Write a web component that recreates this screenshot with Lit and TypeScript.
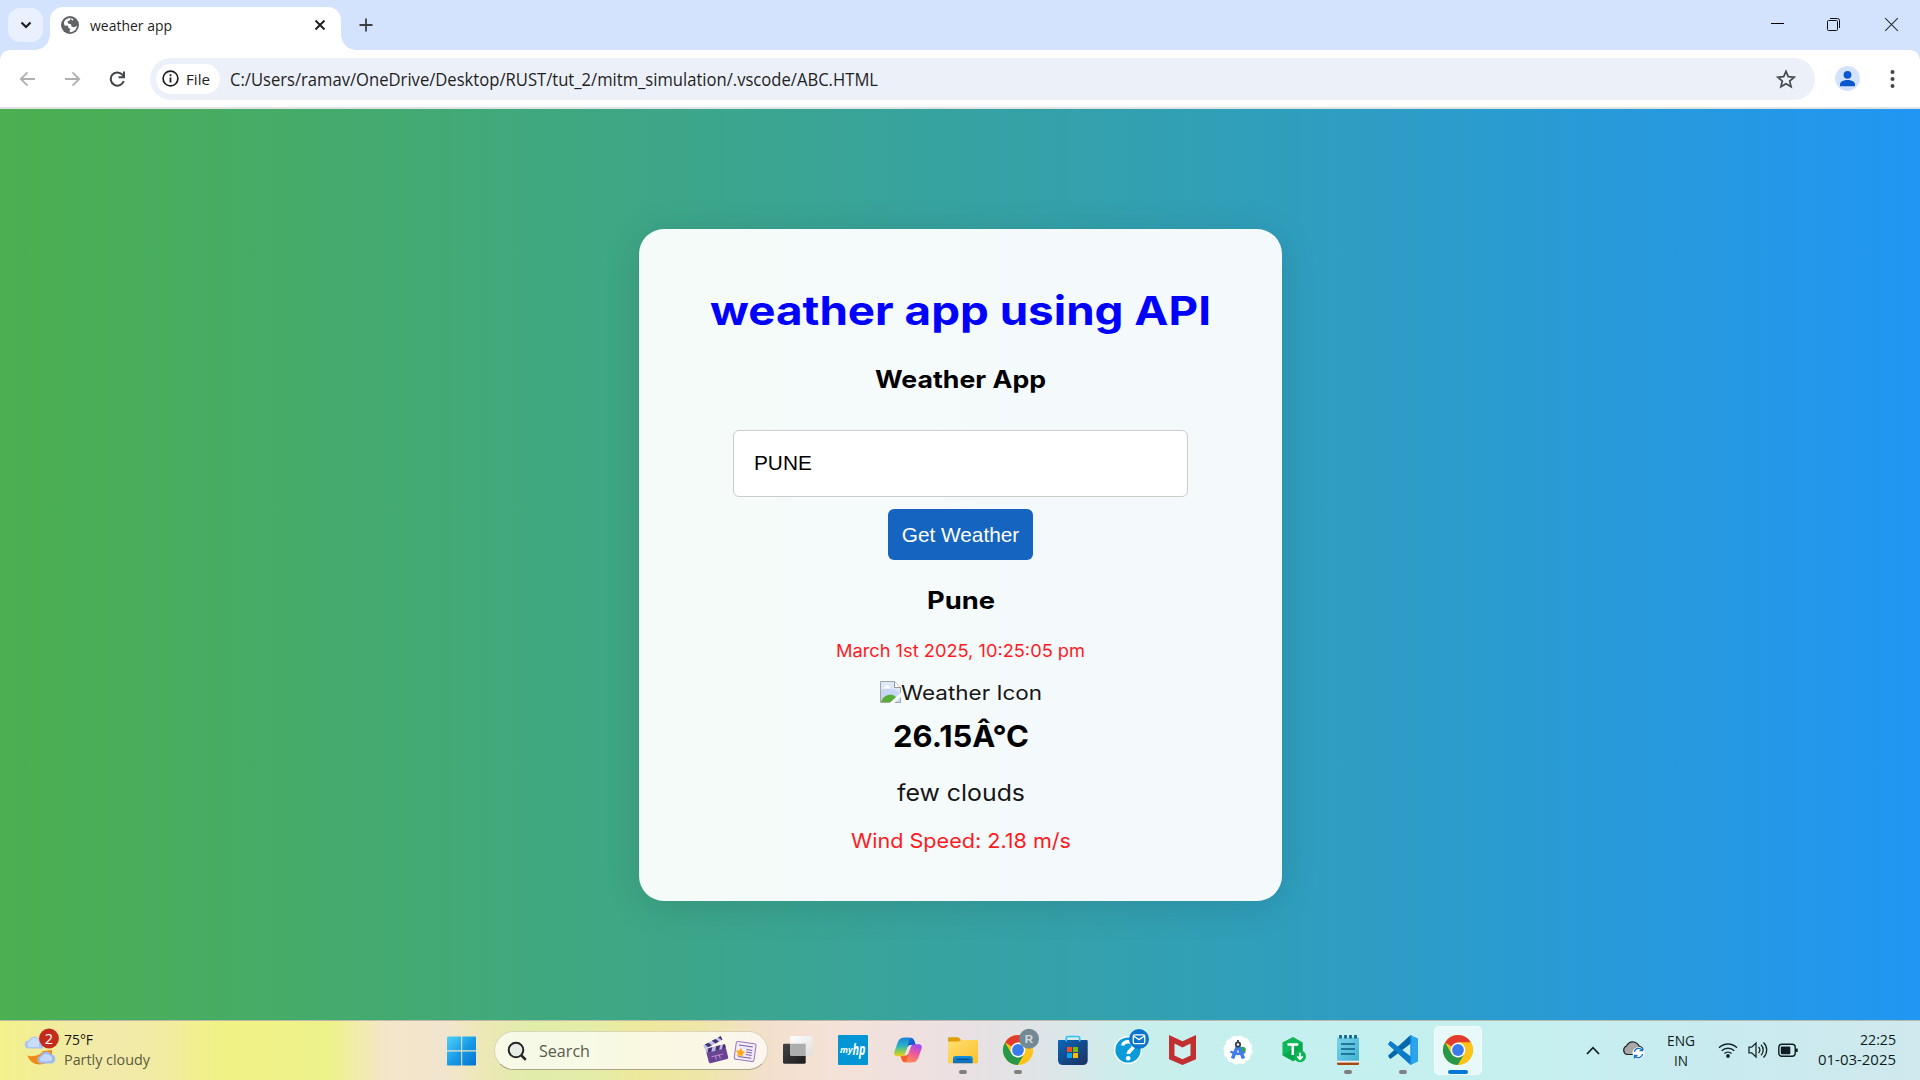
import { LitElement, html, svg, css } from "lit";
import { customElement, property } from "lit/decorators.js";

/* Text set to an exact advance width, whatever font is available. */
@customElement("fit-text")
class FitText extends LitElement {
  @property({ type: Number }) width = 0;
  static styles = css`
    :host { display: inline-block; white-space: nowrap; flex: none; text-align: left; }
    .run { display: inline-block; transform-origin: 0 50%; }
  `;
  firstUpdated() {
    const run = this.renderRoot.querySelector(".run") as HTMLElement;
    const natural = run.getBoundingClientRect().width;
    this.style.width = `${this.width}px`;
    if (natural) run.style.transform = `scaleX(${this.width / natural})`;
  }
  render() { return html`<span class="run"><slot></slot></span>`; }
}

const chromeLogo = svg`
  <circle r="15" fill="#fbc116"/>
  <path d="M0 0 L-13 -7.5 A15 15 0 0 1 13 -7.5 L0 -7.5Z" fill="#e33b2e"/>
  <path d="M-13 -7.5 A15 15 0 0 0 0 15 L6.5 3.7 L0 7.5 L-6.5 3.7Z" fill="#279847"/>
  <path d="M13 -7.5 H0 L6.5 3.75 L0 15 A15 15 0 0 0 13 -7.5Z" fill="#fcc31a"/>
  <circle r="7.4" fill="#fff"/><circle r="5.9" fill="#3a7cec"/>`;

const apps: { art: unknown; running?: boolean; active?: boolean }[] = [
  { art: svg`
    <defs><linearGradient id="tvd" x1="0" y1="0" x2="1" y2="1"><stop stop-color="#444"/><stop offset="1" stop-color="#1c1c1c"/></linearGradient>
    <linearGradient id="tvl" x1="0" y1="0" x2="1" y2="1"><stop stop-color="#fff"/><stop offset="1" stop-color="#dedede"/></linearGradient></defs>
    <rect x="-15" y="-6.3" width="22.7" height="20" rx="1.4" fill="url(#tvd)"/>
    <rect x="-7.7" y="-14" width="22.4" height="20" rx="1.4" fill="url(#tvl)"/>
    <path d="M-7.7 -6.3H7.7V6H-6.3a1.4 1.4 0 0 1-1.4-1.4Z" fill="#adadad"/>` },
  { art: svg`
    <rect x="-15" y="-15" width="30" height="30" rx="1" fill="#0096d6"/>
    <text x="-13" y="3" class="my" textLength="12.5" lengthAdjust="spacingAndGlyphs">my</text>
    <text x="-0.6" y="4.6" class="hp" textLength="13" lengthAdjust="spacingAndGlyphs">hp</text>` },
  { art: svg`
    <defs><linearGradient id="cpa" x1="0" y1="0" x2="0" y2="1"><stop stop-color="#1b7fe0"/><stop offset=".45" stop-color="#2bb6c0"/><stop offset=".75" stop-color="#8fce4c"/><stop offset="1" stop-color="#f3cf1d"/></linearGradient>
    <linearGradient id="cpb" x1=".6" y1="0" x2=".3" y2="1"><stop stop-color="#a14df0"/><stop offset=".5" stop-color="#ee5a9c"/><stop offset="1" stop-color="#ff8a52"/></linearGradient>
    <linearGradient id="cpc" x1="0" y1="0" x2="1" y2="1"><stop stop-color="#1b8ae6"/><stop offset="1" stop-color="#1737b8"/></linearGradient></defs>
    <path d="M-4 -12.3H2.5C5 -12.3 6 -10.5 6.600 -8.500L7.800 -5H3C0 -5 -1 -3 -2 0Z" fill="url(#cpc)"/>
    <path d="M4 12.300H-3C-5.500 12.300 -6 10.500 -6.700 8.500L-7.800 5.600H-3C0 5.600 1 3 2 0Z" fill="#f5602f"/>
    <path d="M2 -12.300H-4.500C-8 -12.300 -9.500 -10 -10.700 -6.500L-13.500 1.500C-14.800 5.200 -12.500 6.300 -10 6.300H-6.500C-4 6.300 -3.200 4.500 -2.500 2.500L0.700 -8C1.300 -10 1.500 -11.500 2 -12.300Z" fill="url(#cpa)"/>
    <path d="M-2 12.300H4.500C8 12.300 9.500 10 10.700 6.500L13.500 -1C14.800 -4.700 12.500 -5.800 10 -5.800H6.500C4 -5.800 3.200 -4 2.500 -2L-0.700 8C-1.300 10 -1.500 11.500 -2 12.300Z" fill="url(#cpb)"/>` },
  { running: true, art: svg`
    <defs><linearGradient id="fo" x1="0" y1="0" x2="1" y2="1"><stop stop-color="#ffdf72"/><stop offset="1" stop-color="#fbc02b"/></linearGradient>
    <linearGradient id="fb" x1="0" y1="0" x2="0" y2="1"><stop stop-color="#1390df"/><stop offset="1" stop-color="#1069b9"/></linearGradient></defs>
    <path d="M-15 -11.500q0-1.200 1.200-1.200h8.300q1 0 1.700.8l2 2.200V-4H-15Z" fill="#dd9d08"/>
    <path d="M-15 -8.500h10.500l3-1.500H14q1 0 1 1v21.300q0 1-1 1H-14q-1 0-1-1Z" fill="url(#fo)"/>
    <path d="M-10 13.300V8.500Q-10 6-7.500 6H7.200Q9.700 6 9.700 8.500v4.800Z" fill="url(#fb)"/>
    <rect x="-6.500" y="8.800" width="13" height="1.300" rx=".6" fill="#0a4d8f"/>` },
  { running: true, art: svg`${chromeLogo}
    <circle cx="11" cy="-11.300" r="10" fill="#738a95"/>
    <text x="11" y="-7" text-anchor="middle" class="badge-r">R</text>` },
  { art: svg`
    <defs><linearGradient id="st" x1="0" y1="0" x2="1" y2="1"><stop stop-color="#0a66bb"/><stop offset="1" stop-color="#1c2f5c"/></linearGradient></defs>
    <path d="M-14 -10H13.700q1 0 1 1V10q0 5-5 5H-10q-5 0-5-5V-9q0-1 1-1Z" fill="url(#st)"/>
    <path d="M-6.800 -8.500v-3q0-2 2-2H4.700q2 0 2 2v3" fill="none" stroke="#2cc5f2" stroke-width="1.700"/>
    <path d="M-6 -3h5v5h-5Z" fill="#f25022"/><path d="M0 -3h5v5h-5Z" fill="#7fba00"/><path d="M-6 3h5v5h-5Z" fill="#00a4ef"/><path d="M0 3h5v5h-5Z" fill="#ffb900"/>` },
  { art: svg`
    <circle r="14" fill="#fff"/><circle r="12.600" fill="#0a9bd8"/>
    <path d="M-5.200 -4.500C-5 -9.500 5.500 -9.800 5.300 -3.800C5.200 0 0.300 0 0.300 4" fill="none" stroke="#fff" stroke-width="3.600"/><circle cx=".2" cy="8.300" r="2.300" fill="#fff"/>
    <circle cx="11" cy="-11" r="10" fill="#0b74ce"/>
    <rect x="5.300" y="-15.200" width="11.400" height="8.800" rx="1.300" fill="none" stroke="#fff" stroke-width="1.300"/><path d="M5.500 -14 11 -10.400 16.500 -14" fill="none" stroke="#fff" stroke-width="1.300"/>` },
  { art: svg`
    <path d="M-14 -15 -0.500 -8.700 13 -15V9.200L-0.500 15 -14 9.200Z" fill="#c22f31"/>
    <path d="M-8.500 -6.500 -0.500 -2.500 7.500 -6.500V5.500L-0.500 9.300 -8.500 5.500Z" fill="#d0f0ef"/>` },
  { art: svg`
    <circle r="13.700" fill="#fff"/><circle r="13.900" fill="none" stroke="#fff" stroke-width="1.400" stroke-dasharray="4 3.280"/>
    <circle cx="4.500" cy="0" r="3.300" fill="#32a350"/>
    <path d="M-0.200 -4.500 -5.500 8.500M.2 -4.500 5.500 8.500" stroke="#3f7ee8" stroke-width="3.500"/>
    <path d="M-7.500 1.500Q0 6 7 2" fill="none" stroke="#3f7ee8" stroke-width="2.500"/>
    <circle cx="0" cy="-5.500" r="2.200" fill="#fff" stroke="#333b45" stroke-width="1.700"/><path d="M0 -10V-7.500" stroke="#333b45" stroke-width="1.800"/>` },
  { art: svg`
    <path d="M0 -12.700 9.700 -7.500V5.500L0 11.200 -10.300 5.500V-7.500Z" fill="#06a84c"/><path d="M0 -12.700 9.700 -7.500 -10.300 5.500V-7.500Z" fill="#12b65a"/>
    <path d="M-5.500 -5.500H5.200M-.2 -5.500V5" stroke="#fff" stroke-width="2.500"/>
    <circle cx="7" cy="6.300" r="6" fill="#10b455"/><path d="M7 2.800V8M4.300 6.300 7 9.200 9.700 6.300" fill="none" stroke="#fff" stroke-width="1.700"/>` },
  { running: true, art: svg`
    <defs><linearGradient id="np" x1="0" y1="0" x2="1" y2="1"><stop stop-color="#7cd5ea"/><stop offset="1" stop-color="#3fb2d6"/></linearGradient></defs>
    <rect x="-11" y="10" width="22" height="5" rx="1" fill="#a4480d"/><rect x="-11" y="9" width="22" height="3.600" fill="#eee"/>
    <path d="M-11 -12.500H11V10.800H-10q-1 0-1-1Z" fill="url(#np)"/>
    <path d="M-7 -6H7M-7 -1H7M-7 4H7" stroke="#0b5e83" stroke-width="1.700"/>
    <path d="M-7.500 -15v3.600M-2.500 -15v3.600M2.500 -15v3.600M7.500 -15v3.600" stroke="#0b6282" stroke-width="2.700"/>` },
  { running: true, art: svg`
    <path d="M7.500 -15 15 -11.500V11.500L7.500 15Z" fill="#2aa5ee"/>
    <path d="M-12.500 -9Q-15 -7-14.800 -5.500L7.500 15 8.500 7Z" fill="#0a7bc8"/>
    <path d="M-12.500 9Q-15 7-14.800 5.500L7.500 -15 8.500 -7Z" fill="#0568ad"/>
    <path d="M-12.500 -9-14.800 -5.500 -4 4 0 1Z" fill="#0c80cf"/>
    <path d="M7.500 -15 9 -14V14L7.500 15Z" fill="#1f9be8"/>` },
  { active: true, art: chromeLogo },
];

const ico = (w: number, h: number, body: unknown) => html`<svg width=${w} height=${h} viewBox="0 0 ${w} ${h}" fill="none">${body}</svg>`;

@customElement("app-root")
class AppRoot extends LitElement {
  static styles = css`
    :host { display: flex; flex-direction: column; width: 1920px; height: 1080px; overflow: hidden; font-family: "Open Sans", "Noto Sans", sans-serif; color: #1f1f1f; }
    * { box-sizing: border-box; }
    svg { display: block; flex: none; }
    .strip { height: 50px; background: #d3e3fd; display: flex; flex: none; padding-left: 8px; }
    .drop { width: 35px; height: 34px; margin-top: 8px; border-radius: 12px; background: #e9f0fe; display: grid; place-items: center; }
    .tab { position: relative; width: 291px; height: 43px; margin: 7px 0 0 7px; background: #fff; border-radius: 13px 13px 0 0; display: flex; align-items: center; padding: 0 14px 7px 11px; }
    .tab::before, .tab::after { content: ""; position: absolute; bottom: 0; width: 15px; height: 15px; }
    .tab::before { left: -15px; background: radial-gradient(circle at 0 0, transparent 14.5px, #fff 15px); }
    .tab::after { right: -15px; background: radial-gradient(circle at 100% 0, transparent 14.5px, #fff 15px); }
    .title { font-size: 14.5px; line-height: 20px; margin-left: 11px; flex: 1; margin-top: 1px; }
    .plus { margin: 18px 0 0 18px; }
    .controls { margin: 17px 21px 0 auto; display: flex; gap: 43px; }
    .controls svg:first-child { margin-right: -2px; }
    .bar { height: 59px; flex: none; background: #d3e3fd; display: flex; }
    .inner { flex: 1; background: #fff; border-radius: 10px 10px 0 0; border-bottom: 2px solid #dfe3e1; display: flex; align-items: center; padding-left: 19px; }
    .nav { display: flex; gap: 28px; width: 131px; }
    .omni { width: 1665px; height: 42px; border-radius: 21px; background: #ecf0f9; display: flex; align-items: center; padding: 0 19px 0 6px; }
    .chip { width: 64px; height: 30px; border-radius: 15px; background: #fff; display: flex; align-items: center; padding-left: 6px; gap: 7px; font-size: 15px; line-height: 20px; font-weight: 500; margin-right: 10px; }
    .url { font-size: 18px; line-height: 24px; flex: 1; margin-top: 1px; }
    .avatar { margin-left: 20px; }
    .dots { margin-left: 29px; }
    .page { flex: 1; background: linear-gradient(to right, #4caf50, #2196f3); display: flex; align-items: flex-start; justify-content: center; padding-top: 120px; }
    .card { width: 643px; height: 672px; margin-left: 1px; border-radius: 25px; background: rgba(255,255,255,.95); box-shadow: 0 5px 38px rgba(0,0,0,.12); padding-top: 57px; display: flex; flex-direction: column; align-items: center; font-family: Inter, sans-serif; color: #000; }
    .h1 { font-size: 40px; font-weight: 700; line-height: 50px; color: #00f; }
    .h2 { font-size: 24px; font-weight: 700; line-height: 30px; margin-top: 29px; }
    .field { width: 455px; height: 67px; margin-top: 35px; border: 1px solid #ccc; border-radius: 6px; background: #fff; font: 20.8px/63px "Liberation Sans", Arial, sans-serif; padding-left: 20px; }
    .btn { width: 145px; height: 51px; margin-top: 12px; border: 0; border-radius: 6px; background: #1565c0; color: #fff; font: 20.8px/51px "Liberation Sans", Arial, sans-serif; padding: 0; text-align: center; }
    .city { font-size: 24px; font-weight: 700; line-height: 30px; margin-top: 26px; }
    .date { font-size: 17.200px; line-height: 24px; margin-top: 23px; color: #ff1a1f; }
    .pic { display: flex; font-size: 20.200px; line-height: 24px; height: 24px; margin-top: 18px; color: #161616; }
    .temp { font-size: 30.500px; font-weight: 700; line-height: 36px; margin-top: 13px; }
    .desc { font-size: 22.700px; line-height: 30px; margin-top: 24px; color: #161616; }
    .wind { font-size: 20.300px; line-height: 24px; margin-top: 21px; color: #ff1a1f; }
    .task { height: 60px; flex: none; border-top: 1px solid #b9b9ac; display: flex; align-items: center; background: linear-gradient(to right, #f2f18a 0, #f2eca0 60px, #f2e9ab 110px, #f2eca0 170px, #f1f285 215px, #eef28b 330px, #f3e6c8 385px, #f2e5cf 445px, #eee8b8 480px, #e1eca9 530px, #e4eda8 590px, #ede89c 640px, #eee6a8 700px, #f3e0cb 765px, #f4e2d9 840px, #ece0e2 950px, #dde5e8 1050px, #c8efec 1140px, #c4f0ef 1300px, #c6f0f0 1500px, #c8ebef 1700px, #cfe9ee 1920px); }
    .weather { width: 447px; display: flex; padding-left: 24px; gap: 4px; }
    .wt { display: flex; flex-direction: column; font-size: 15px; line-height: 20px; margin-top: 2px; color: #151510; }
    .dim { color: #5c5c3e; }
    .search { width: 274px; height: 39px; border-radius: 20px; margin: 0 4px 0 17px; background: rgba(255,255,255,.7); border: 1px solid rgba(190,180,140,.5); border-bottom-color: #aaa385; display: flex; align-items: center; padding: 0 10px 0 12px; font-size: 17px; line-height: 22px; color: #5a5a50; }
    .search fit-text { margin-left: 12px; }
    .art { margin-left: auto; }
    .apps { display: flex; gap: 1px; margin-left: -1px; }
    .app { position: relative; width: 54px; height: 59px; }
    .app svg { position: relative; overflow: visible; }
    .tile { position: absolute; left: 3px; top: 5px; width: 48px; height: 49px; border-radius: 5px; background: rgba(255,255,255,.58); border: 1px solid rgba(255,255,255,.4); }
    .my { font: italic 700 9px "Open Sans", sans-serif; fill: #fff; }
    .hp { font: italic 700 16px "Open Sans", sans-serif; fill: #fff; }
    .badge-r { font: 700 11.500px "Liberation Sans", sans-serif; fill: #d3d9dd; }
    .tray { margin-left: auto; display: flex; align-items: center; padding-right: 24px; color: #101c20; font-size: 15px; line-height: 20px; }
    .cloud { margin-top: -2px; }
    .lang { display: flex; flex-direction: column; align-items: center; width: 28px; margin: -1px 23px 0 13px; }
    .status { display: flex; gap: 10px; margin-top: -2px; }
    .clock { display: flex; flex-direction: column; align-items: flex-end; margin: -3px 0 0 20px; }
  `;

  render() {
    return html`
    <div class="strip">
      <div class="drop">${ico(12, 8, svg`<path d="M1.500 1.500 6 6l4.500-4.500" stroke="#1f1f1f" stroke-width="2.200"/>`)}</div>
      <div class="tab">
        ${ico(18, 18, svg`<circle cx="9" cy="9" r="9" fill="#5f6368"/><path d="M3 7.500C3 4.300 6 2 9.500 2L9 4.200 6.500 5.500 7 7.500 10 8.300 10.500 10.500 13 11.200C15 11 16.200 9.500 16 8.800C16.200 13 13 16.200 9 16.200L8.500 14.500 9.500 13.200 7.300 11.800 7 9.800 3.500 9.500Z" fill="#fff"/><path d="M9 2.200 12.500 3 11.500 4.700Z" fill="#fff"/>`)}
        <fit-text class="title" width="82">weather app</fit-text>
        ${ico(14, 14, svg`<path d="m2.500 2.500 9 9m0-9-9 9" stroke="#1f1f1f" stroke-width="1.900"/>`)}
      </div>
      <div class="plus">${ico(14, 14, svg`<path d="M7 .5v13M.5 7h13" stroke="#3c4043" stroke-width="1.800"/>`)}</div>
      <div class="controls">
        ${ico(15, 15, svg`<path d="M1 6.500h13" stroke="#000" stroke-width="1"/>`)}
        ${ico(15, 15, svg`<rect x="1.500" y="3.500" width="10" height="10" rx="1" stroke="#111"/><path d="M4 1.500h7.500q2 0 2 2v7.500" stroke="#111"/>`)}
        ${ico(15, 15, svg`<path d="m1.200 1.200 12.600 12.600m0-12.600L1.200 13.800" stroke="#2b2f36" stroke-width="1.100"/>`)}
      </div>
    </div>
    <div class="bar"><div class="inner">
      <div class="nav">
        ${ico(17, 16, svg`<path d="M16 8H2M8.500 1.300 1.800 8l6.700 6.700" stroke="#b0b0b0" stroke-width="1.800"/>`)}
        ${ico(17, 16, svg`<path d="M1 8h14M8.500 1.300 15.200 8l-6.700 6.700" stroke="#b0b0b0" stroke-width="1.800"/>`)}
        ${ico(17, 16, svg`<path d="M14.700 10A6.600 6.600 0 1 1 13.300 3.600L15 5.300" stroke="#3f4246" stroke-width="2"/><path d="M15 .5V6.200H9.500" stroke="#3f4246" stroke-width="1.900"/>`)}
      </div>
      <div class="omni">
        <div class="chip">${ico(17, 17, svg`<circle cx="8.500" cy="8.500" r="7.400" stroke="#1f1f1f" stroke-width="1.700"/><path d="M8.500 7.500v5M8.500 4.300v1.900" stroke="#1f1f1f" stroke-width="1.800"/>`)}<fit-text width="24">File</fit-text></div>
        <fit-text class="url" width="648">C:/Users/ramav/OneDrive/Desktop/RUST/tut_2/mitm_simulation/.vscode/ABC.HTML</fit-text>
        ${ico(20, 20, svg`<path d="m10 2.300 2.300 5.400 5.900.5-4.500 3.900 1.400 5.700L10 14.700l-5.100 3.100 1.400-5.700-4.500-3.900 5.900-.5Z" stroke="#46494d" stroke-width="1.700"/>`)}
      </div>
      <div class="avatar">${ico(25, 25, svg`<circle cx="12.500" cy="12.500" r="12.500" fill="#d3e3fd"/><circle cx="12.500" cy="8.800" r="3.900" fill="#0b57d0"/><path d="M5 20.300v-2.100c0-2.600 3.800-4.200 7.500-4.200s7.500 1.600 7.500 4.200v2.100Z" fill="#0b57d0"/>`)}</div>
      <div class="dots">${ico(7, 20, svg`<circle cx="3.500" cy="3" r="2" fill="#444"/><circle cx="3.500" cy="10" r="2" fill="#444"/><circle cx="3.500" cy="17" r="2" fill="#444"/>`)}</div>
    </div></div>
    <div class="page"><div class="card">
      <fit-text class="h1" width="501">weather app using API</fit-text>
      <fit-text class="h2" width="171">Weather App</fit-text>
      <div class="field">PUNE</div>
      <button class="btn">Get Weather</button>
      <fit-text class="city" width="68">Pune</fit-text>
      <fit-text class="date" width="249">March 1st 2025, 10:25:05 pm</fit-text>
      <div class="pic">
        ${ico(21, 22, svg`<path d="M.5 .5H14.500L20.500 6.500V21.500H.5Z" fill="#c6d6f3" stroke="#a5a5a5"/><path d="M1 1H14V6.500H20V12Q10 5 1 9Z" fill="#dce7fa"/><path d="M14.500 .8V6.500H20.500" fill="#fff" stroke="#999"/><path d="M3.500 7.500q0-2 2-2 .8-2 2.500-1 2 0 2 3Z" fill="#fff"/><path d="M1 21C3 15 8 13 13 14L16 16V21Z" fill="#57ad36"/><path d="M9.500 22 21 11.500V16L14.500 22Z" fill="#f6fbfb"/>`)}
        <fit-text width="141">Weather Icon</fit-text>
      </div>
      <fit-text class="temp" width="136">26.15Â°C</fit-text>
      <fit-text class="desc" width="128">few clouds</fit-text>
      <fit-text class="wind" width="220">Wind Speed: 2.18 m/s</fit-text>
    </div></div>
    <div class="task">
      <div class="weather">
        <svg width="36" height="48" viewBox="0 -4 36 48">
          <path d="M4.500 17.500a4 4 0 0 1 .5-8 6 6 0 0 1 10-2q3 0 4 4v6Z" fill="#a9c6f2"/><path d="M5 16a3 3 0 0 1 1-5.500 5 5 0 0 1 9-1.500v7Z" fill="#cbdcf8"/>
          <path d="M3.500 24.500C9 26.500 17 24 19 20L28 19V27C22 36 7 36 3.500 24.500Z" fill="#ef8a1d"/>
          <path d="M17 32.500a4 4 0 0 1-.5-7.800 6 6 0 0 1 10.500-1.500 4.800 4.800 0 0 1 1 9.300Z" fill="#9dbdf0"/><path d="M17 30.500a3 3 0 0 1 1-5 5 5 0 0 1 8-1 3.500 3.500 0 0 1 1 5.500Z" fill="#c6d9f8"/>
          <circle cx="25" cy="7.500" r="9.900" fill="#c42b1c"/><text x="25" y="12.700" text-anchor="middle" font-size="14.500" fill="#fff">2</text></svg>
        <div class="wt"><fit-text width="29">75°F</fit-text><fit-text class="dim" width="86">Partly cloudy</fit-text></div>
      </div>
      <svg width="30" height="30" viewBox="0 0 30 30"><defs><linearGradient id="win" x1="0" y1="0" x2="1" y2="1"><stop stop-color="#4fd3fb"/><stop offset=".5" stop-color="#199ce6"/><stop offset="1" stop-color="#0672d0"/></linearGradient></defs><path d="M1 .5H14.200V14.200H0V1.500Q0 .5 1 .5ZM15.200 .5H28q1 0 1 1V14.200H15.200ZM0 15.500H14.200V29.500H1q-1 0-1-1ZM15.200 15.500H29V28.500q0 1-1 1H15.200Z" fill="url(#win)"/></svg>
      <div class="search">
        ${ico(20, 20, svg`<circle cx="9" cy="9" r="7.300" fill="#e8ece6" stroke="#252525" stroke-width="2"/><path d="m14 14 4.800 4.800" stroke="#252525" stroke-width="2.500"/>`)}
        <fit-text width="51">Search</fit-text>
        <div class="art">${ico(54, 30, svg`
          <g transform="translate(2.500 13) rotate(-14)"><rect x="0" y="0" width="20" height="15" rx="1.500" fill="#694493"/><rect x="0" y="0" width="20" height="4.200" fill="#b8b7ef"/><path d="M3 0h4L5 4.200H1ZM11 0h4l-2 4.200H9ZM18 0h2v3l-.7 1.200H16Z" fill="#493068"/><path d="M4 9h12M8 9v4M12 9v4" stroke="#bb8fd0" stroke-width="1"/></g>
          <g transform="translate(0 9.500) rotate(-28)"><rect width="20" height="4" rx=".7" fill="#bbc2f3"/><path d="M2 0h4l2 4H4ZM10 0h4l2 4h-4ZM17 0h3v4h-1Z" fill="#49336f"/></g>
          <g transform="translate(32.500 5) rotate(8)"><rect x="1" y="0" width="20" height="18" rx="2" fill="#f0ebf8" stroke="#9b78b8"/><path d="M4 3.500H18M12 7H18M12 9.500H18M12 12H18M5 15H18" stroke="#7e60a5"/><path d="m6.500 6 1.500 3 3.300.4-2.400 2.300.6 3.300-3-1.600-3 1.600.6-3.300-2.400-2.300 3.300-.4Z" fill="#ffa814"/></g>`)}</div>
      </div>
      <div class="apps">
        ${apps.map(a => html`<div class="app">${a.active ? html`<div class="tile"></div>` : ""}<svg width="54" height="59" viewBox="-27 -29 54 59">${a.art}
          ${a.running ? svg`<rect x="-4" y="20" width="8" height="4" rx="2" fill="#7f8080"/>` : ""}
          ${a.active ? svg`<rect x="-10" y="20" width="20" height="4" rx="2" fill="#0078d4"/>` : ""}</svg></div>`)}
      </div>
      <div class="tray">
        ${ico(14, 9, svg`<path d="m1 8 6-6.300L13 8" stroke="#111c20" stroke-width="1.700"/>`)}
        <svg class="cloud" width="54" height="24" viewBox="-24 0 54 24"><path d="M5 16.500a4.500 4.500 0 0 1-.5-8.500Q7 3 12 4q4 1 5 4 4 1 4 5v3.500Z" transform="translate(-2 0)" fill="#a7a7a7" stroke="#222" stroke-width="1.200"/><circle cx="14.500" cy="15" r="6" fill="#fff"/><path d="M10.500 14a4.200 4.200 0 0 1 7.500-2M18.500 16a4.200 4.200 0 0 1-7.500 2M18.500 9.500V12.700H15.500M10.500 20.500V17.400h3" fill="none" stroke="#1570c8" stroke-width="1.300"/></svg>
        <div class="lang"><fit-text width="28">ENG</fit-text><fit-text width="14">IN</fit-text></div>
        <div class="status">
          ${ico(20, 18, svg`<path d="M1 6.800a12.700 12.700 0 0 1 18 0M3.700 9.800a8.900 8.900 0 0 1 12.600 0M6.400 12.600a5.100 5.100 0 0 1 7.200 0" stroke="#16262a" stroke-width="1.400"/><circle cx="10" cy="15" r="1.900" fill="#16262a"/>`)}
          ${ico(20, 18, svg`<path d="M1 6.200h2.700L8 2v14l-4.300-4.200H1Z" stroke="#16262a" stroke-width="1.300"/><path d="M10.500 6a4 4 0 0 1 0 6M13 3.800a7.200 7.200 0 0 1 0 10.400M15.500 1.500a10.400 10.400 0 0 1 0 15" stroke="#16262a" stroke-width="1.300"/>`)}
          ${ico(20, 18, svg`<rect x=".8" y="3.300" width="16.400" height="12" rx="3" stroke="#111c20" stroke-width="1.400"/><rect x="2.800" y="5.400" width="9.500" height="7.800" rx="1" fill="#111c20"/><path d="M18.500 7.500v3.500" stroke="#111c20" stroke-width="2.400"/>`)}
        </div>
        <div class="clock"><fit-text width="36">22:25</fit-text><fit-text width="78">01-03-2025</fit-text></div>
      </div>
    </div>`;
  }
}
